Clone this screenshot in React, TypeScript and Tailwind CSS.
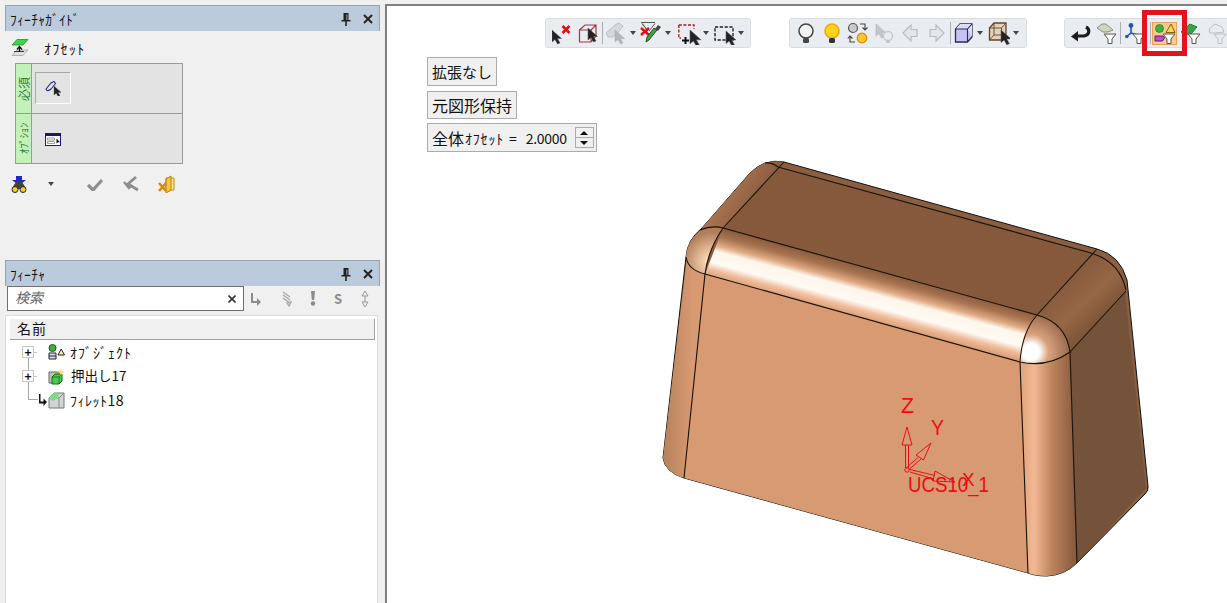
import React from "react";

type SvgProps = { w: number; h?: number; className?: string; children: React.ReactNode };

// every icon uses pixel coordinates, so the viewBox equals its size
const Svg: React.FC<SvgProps> = ({ w, h = 24, className, children }) => (
  <svg width={w} height={h} viewBox={`0 0 ${w} ${h}`} className={`shrink-0 ${className ?? ""}`}>
    {children}
  </svg>
);

const Cursor = ({ x, y, fill = "#222", s = 1 }: { x: number; y: number; fill?: string; s?: number }) => (
  <path
    transform={`translate(${x} ${y}) scale(${s})`}
    d="M0 0V12L3 9.5L5.5 14L8 13L5.5 8.5H9.5Z"
    fill={fill}
    stroke={fill === "#222" ? "#555" : "#aaa"}
    strokeWidth=".5"
  />
);

const Funnel = ({ x, y, fill = "#fff" }: { x: number; y: number; fill?: string }) => (
  <path
    transform={`translate(${x} ${y})`}
    d="M0 0H12L8 5V9.5H4V5Z"
    fill={fill}
    stroke="#555"
    strokeWidth="1"
  />
);

const Drop = ({ className }: { className?: string }) => (
  <Svg w={6} h={4} className={className}>
    <path d="M0 0H6L3 4Z" fill="#444" />
  </Svg>
);

const Sep = ({ className }: { className?: string }) => (
  <div className={`w-px h-[22px] bg-[#a9aeb3] shrink-0 ${className ?? ""}`} />
);

const Bulb = ({ on }: { on?: boolean }) => (
  <>
    <circle cx="8" cy="8" r="7" fill={on ? "#ffd21e" : "#f2f2f2"} stroke={on ? "#eca900" : "#444"} strokeWidth="1.5" />
    <rect x="5" y="15" width="6" height="5" rx="1.5" fill={on ? "#333" : "#444"} />
  </>
);

const PaneHeader = ({ title }: { title: string }) => (
  <div className="h-[26px] shrink-0 flex items-center bg-[#bccbdc] border-t border-x border-[#9aa3ad] pl-[4px] pr-[6px]">
    <span className="text-[13.5px] text-[#111] leading-none tracking-[.3px] flex-1 pt-[2px]">{title}</span>
    <Svg w={10} h={14} className="mr-[12px]">
      <path d="M2.5 1H7.5V8H9.5V9.5H5.8V14H4.2V9.5H.5V8H2.5ZM5.5 2.5V8H6.3V2.5Z" fill="#222" />
    </Svg>
    <Svg w={10} h={10}>
      <path d="M1 1L9 9M9 1L1 9" stroke="#222" strokeWidth="2" />
    </Svg>
  </div>
);

const ModelDrawing = () => (
  <svg viewBox="387 6 840 597" width={840} height={597} className="absolute left-0 top-0">
    <defs>
      <linearGradient id="frontFillet" gradientUnits="userSpaceOnUse" x1="880" y1="271" x2="867" y2="319">
        <stop offset="0" stopColor="#8a5c3f" />
        <stop offset=".18" stopColor="#a87350" />
        <stop offset=".36" stopColor="#e0ab85" />
        <stop offset=".48" stopColor="#fff6ec" />
        <stop offset=".72" stopColor="#fffaf4" />
        <stop offset=".86" stopColor="#f0bd9c" />
        <stop offset="1" stopColor="#dc9f78" />
      </linearGradient>
      <linearGradient id="leftStrip" gradientUnits="userSpaceOnUse" x1="664" y1="0" x2="692" y2="0">
        <stop offset="0" stopColor="#b8825c" />
        <stop offset="1" stopColor="#d79a72" />
      </linearGradient>
      <linearGradient id="rightStrip" gradientUnits="userSpaceOnUse" x1="1024" y1="0" x2="1074" y2="0">
        <stop offset="0" stopColor="#e4a880" />
        <stop offset=".2" stopColor="#f2b994" />
        <stop offset=".55" stopColor="#bd845e" />
        <stop offset="1" stopColor="#8a5c40" />
      </linearGradient>
      <linearGradient id="leftTop" gradientUnits="userSpaceOnUse" x1="722" y1="198" x2="750" y2="215">
        <stop offset="0" stopColor="#a9744f" />
        <stop offset="1" stopColor="#8a5d40" />
      </linearGradient>
      <linearGradient id="rightTop" gradientUnits="userSpaceOnUse" x1="1060" y1="280" x2="1098" y2="320">
        <stop offset="0" stopColor="#84583c" />
        <stop offset=".6" stopColor="#966745" />
        <stop offset="1" stopColor="#7f563a" />
      </linearGradient>
      <radialGradient id="cornerLeft" gradientUnits="userSpaceOnUse" cx="712" cy="262" r="30">
        <stop offset="0" stopColor="#ffffff" />
        <stop offset=".25" stopColor="#f5cfae" />
        <stop offset="1" stopColor="#b07d58" />
      </radialGradient>
      <radialGradient id="cornerRight" gradientUnits="userSpaceOnUse" cx="1031" cy="352" r="42">
        <stop offset="0" stopColor="#ffffff" />
        <stop offset=".2" stopColor="#ffffff" />
        <stop offset=".42" stopColor="#d8a27d" />
        <stop offset="1" stopColor="#8f6045" />
      </radialGradient>
    </defs>

    {/* silhouette */}
    <path
      d="M765 163Q775 160 784 162L1097 249Q1120 255 1127 280L1148 486Q1149 490 1145 494L1077 563Q1065 575 1047 576Q1035 576 1028 573L684 478Q665 472 663 458L686 257Q687 240 702 228L750 173Q757 166 765 163Z"
      fill="#8a5e41"
      stroke="#111"
      strokeWidth="1"
    />
    <path d="M723 228L784 162Q775 160 765 163Q757 166 750 173L702 228Q712 225 723 228Z" fill="url(#leftTop)" />
    <path d="M723 228L778 167L1091 253L1037 315Z" fill="#86593c" />
    <path d="M1037 315L1091 253Q1120 262 1126 290L1070 352Q1066 323 1037 315Z" fill="url(#rightTop)" />
    <path d="M1070 352L1125 292L1146 488L1077 563Z" fill="#75523a" />
    <path d="M723 228L1037 315L1020 362L705 274Z" fill="url(#frontFillet)" />
    <path d="M705 274L1020 362L1028 573L684 478Z" fill="#d79a72" />
    <path d="M687 257L705 274L684 478Q665 472 663 458Z" fill="url(#leftStrip)" />
    <path d="M1020 362Q1047 368 1070 352L1077 563Q1065 575 1047 576Q1035 576 1028 573Z" fill="url(#rightStrip)" />
    <path d="M705 274Q687 268 686 257Q687 240 702 229Q712 225 723 228Q708 250 705 274Z" fill="url(#cornerLeft)" />
    <path d="M1020 362Q1020 335 1037 315Q1066 323 1070 352Q1047 368 1020 362Z" fill="url(#cornerRight)" />

    {/* edges */}
    <g fill="none" stroke="#1a1208" strokeWidth="1.1">
      <path d="M705 274L1020 362M723 228L1037 315M778 167L1091 253M723 228L784 162M1037 315L1097 249M1070 352L1126 291" />
      <path d="M705 274L684 478M1020 362L1028 573M1070 352L1077 563" />
      <path d="M705 274Q708 250 723 228M686 257Q688 270 705 274M700 230Q712 225 723 228" />
      <path d="M1020 362Q1047 368 1070 352Q1066 323 1037 315Q1022 332 1020 362" />
      <path d="M1091 253Q1120 262 1126 290" />
      <path d="M765 163Q772 162 778 167" />
    </g>

    {/* UCS triad */}
    <g fill="none" stroke="#e8101c" strokeWidth="1">
      <path d="M905.5 468V445M908.5 468V445M902 445H912L907 427Z" />
      <path d="M906 468L918 457.5M908.5 470L921 459M916 455L923.5 460L931 443Z" />
      <path d="M910 469.5L935 475.5M910 472L934 479M935 471L933 481L955 482Z" />
      <circle cx="907" cy="470" r="2.2" />
    </g>
    <g fill="#f00a14" fontFamily="'Liberation Sans', sans-serif" fontSize="22">
      <text x="901" y="413" textLength="13" lengthAdjust="spacingAndGlyphs">Z</text>
      <text x="931" y="435" textLength="13" lengthAdjust="spacingAndGlyphs">Y</text>
      <text x="962" y="486" fontSize="19">X</text>
      <text x="908" y="492" textLength="81" lengthAdjust="spacingAndGlyphs">UCS10_1</text>
    </g>
  </svg>
);

const SelectionBar = () => (
  <div className="flex items-center w-[206px] h-[30px] shrink-0 bg-[#e9edf1] border border-[#d9dde1] rounded-[3px] pl-[6px]">
    <Svg w={20}>
      <Cursor x={0} y={9} />
      <path d="M10.5 5L17.5 12M17.5 5L10.5 12" stroke="#e01010" strokeWidth="2.6" />
    </Svg>
    <Svg w={20} className="ml-[6px]">
      <path d="M1.5 9L7 4H18V15L13 21H1.5ZM1.5 9H13V21M13 9L18 4" fill="none" stroke="#a23a3a" strokeWidth="1.2" />
      <Cursor x={10} y={7} />
    </Svg>
    <Sep className="ml-[4px]" />
    <Svg w={20} className="ml-[2px]">
      <path d="M1 12L10 4L14 2L18 5L15 9L8 16L3 16Z" fill="#d5d9dc" stroke="#bcc1c5" />
      <Cursor x={10} y={9} fill="#b4b8bc" />
    </Svg>
    <Drop className="ml-[5px]" />
    <Svg w={22} className="ml-[4px]">
      <path d="M1 1.5H15M2 2.5L8 10" stroke="#555" strokeWidth="1.2" fill="none" />
      <path d="M9 10L15 2.5" stroke="#555" strokeWidth="1" />
      <path d="M1 7L9 14M9 7L1 14" stroke="#e01010" strokeWidth="2.4" />
      <path d="M6 21L9 19L17 9L14 7L7 16Z" fill="#38a838" stroke="#222" strokeWidth=".8" />
      <path d="M15 8L18 4L21 6L18 10Z" fill="#444" />
    </Svg>
    <Drop className="ml-[3px]" />
    <Svg w={24} className="ml-[7px]">
      <path d="M.8 4H16V8M.8 4V17H3" fill="none" stroke="#a22020" strokeWidth="1.4" strokeDasharray="3 1.6" />
      <path d="M4 19.5H11M7.5 16V23" stroke="#111" strokeWidth="2" />
      <Cursor x={12} y={9} s={1.15} />
    </Svg>
    <Drop className="ml-[1px]" />
    <Svg w={22} className="ml-[5px]">
      <path d="M1 6H19V19H1Z" fill="none" stroke="#222" strokeWidth="1.4" strokeDasharray="3.2 1.6" />
      <Cursor x={12} y={10} s={1.05} />
    </Svg>
    <Drop className="ml-[2px]" />
  </div>
);

const ViewBar = () => (
  <div className="flex items-center w-[238px] h-[30px] shrink-0 ml-[38px] bg-[#e9edf1] border border-[#d9dde1] rounded-[3px] pl-[8px]">
    <Svg w={16}>
      <g transform="translate(0 2)"><Bulb /></g>
    </Svg>
    <Svg w={16} className="ml-[10px]">
      <g transform="translate(0 2)"><Bulb on /></g>
    </Svg>
    <Svg w={22} className="ml-[7px]">
      <circle cx="6" cy="7" r="4.5" fill="#c9c9c9" stroke="#555" strokeWidth="1.2" />
      <circle cx="15" cy="17" r="4.8" fill="#ffc433" stroke="#d88a00" strokeWidth="1.2" />
      <path d="M13 3H18V9M15.5 6.5L18 9L20.5 6.5M8 21H3V15M.8 17.5L3 15L5.5 17.5" fill="none" stroke="#444" strokeWidth="1.1" />
    </Svg>
    <Svg w={19} className="ml-[6px]">
      <Cursor x={1} y={3} fill="#c2c6ca" />
      <circle cx="13" cy="15" r="4.5" fill="none" stroke="#c5c9cc" strokeWidth="1.3" />
      <rect x="11" y="19" width="4" height="3" fill="#c5c9cc" />
    </Svg>
    <Svg w={16} className="ml-[8px]">
      <path d="M1 12L9 4V8.5H15V15.5H9V20Z" fill="#e4e7ea" stroke="#b9bdc1" strokeWidth="1.2" />
    </Svg>
    <Svg w={16} className="ml-[11px]">
      <path d="M15 12L7 4V8.5H1V15.5H7V20Z" fill="#e4e7ea" stroke="#b9bdc1" strokeWidth="1.2" />
    </Svg>
    <Sep className="ml-[5px]" />
    <Svg w={19} className="ml-[3px]">
      <path d="M1.5 8L6 3H18V16L13.5 21H1.5Z" fill="#c5c3f3" stroke="#2b2b52" strokeWidth="1.3" />
      <path d="M6 3H18V16L13.5 8H1.5Z" fill="#ddddf7" />
      <path d="M1.5 8H13.5V21M13.5 8L18 3" fill="none" stroke="#2b2b52" strokeWidth="1.1" />
    </Svg>
    <Drop className="ml-[4px]" />
    <Svg w={22} className="ml-[5px]">
      <path d="M1.5 7L6 2H18V14L13.5 19H1.5Z" fill="#e3d2b8" stroke="#5d4630" strokeWidth="1.3" />
      <path d="M1.5 7H13.5V19M13.5 7L18 2M6 2V14H18M6 14L1.5 19" fill="none" stroke="#5d4630" strokeWidth=".9" />
      <Cursor x={13} y={9} s={1.05} />
    </Svg>
    <Drop className="ml-[3px]" />
  </div>
);

const FilterBar = () => (
  <div className="flex items-center w-[200px] h-[30px] shrink-0 ml-[37px] bg-[#e9edf1] border border-[#d9dde1] rounded-[3px] pl-[5px]">
    <Svg w={21}>
      <path d="M16 6C20 8 20 14 14 15H7" fill="none" stroke="#1c1c1c" strokeWidth="3.2" />
      <path d="M8 10L1 15.5L8 20.5Z" fill="#1c1c1c" />
    </Svg>
    <Svg w={21} className="ml-[5px]">
      <path d="M1 7L6 3L10 3L17 9L12 11L7 11Z" fill="#c9d8c5" stroke="#9a8a70" />
      <Funnel x={8} y={13} />
    </Svg>
    <Sep className="ml-[3px]" />
    <Svg w={22} className="ml-[4px]">
      <path d="M6 4V12L1 16M6 12L13 14" stroke="#2952b3" strokeWidth="1.6" fill="none" />
      <circle cx="6" cy="4.5" r="2.4" fill="#2952b3" />
      <circle cx="1.8" cy="15.5" r="1.8" fill="#2952b3" />
      <Funnel x={8} y={13} />
    </Svg>
    <Sep className="ml-[3px]" />
    <div className="ml-px w-[25px] h-[23px] shrink-0 bg-[#fdc88f] border border-[#e8a15a]">
      <Svg w={23} h={21}>
        <circle cx="6.5" cy="5.5" r="4" fill="#3cb23c" stroke="#1f7a1f" strokeWidth=".7" />
        <path d="M13 9.5L18 1L22 9.5Z" fill="#f4d94c" stroke="#7a6510" />
        <path d="M2 13H10L11.5 15L9.5 18H2Z" fill="#c34ad1" stroke="#5a1f63" />
        <Funnel x={10} y={11} />
      </Svg>
    </div>
    <Svg w={22} className="ml-[3px]">
      <path d="M1 11L10 3L17 6L10 14Z" fill="#2fa84a" stroke="#1f7a33" />
      <Funnel x={8} y={13} />
    </Svg>
    <Svg w={22} className="ml-[5px]">
      <path d="M2 8L8 3L15 6L17 11L9 12L3 12Z" fill="none" stroke="#bdc1c5" />
      <path d="M7 13H19L15 18V22.5H11V18Z" fill="none" stroke="#bdc1c5" />
    </Svg>
  </div>
);

const OptionButton = ({ children, className }: { children: React.ReactNode; className?: string }) => (
  <div className={`flex items-center bg-[#f0f0f0] border border-[#ababab] text-[#111] leading-none ${className ?? ""}`}>
    {children}
  </div>
);

const TreeToggle = () => (
  <>
    <div className="relative ml-[12px] w-[12px] h-[12px] border border-[#c8c8c8] bg-white flex items-center justify-center text-[12px] font-bold leading-none">
      +
    </div>
    <div className="w-[3px] h-px bg-[#c8c8c8]" />
  </>
);

const App = () => (
  <div className="w-[1227px] h-[603px] flex bg-[#f0f0f0] overflow-hidden pt-[4px] font-['Noto_Sans_CJK_JP',sans-serif]">
    <aside className="w-[385px] shrink-0 flex flex-col pt-px pl-[5px] pr-[5px]">
      {/* feature guide */}
      <section className="h-[255px] shrink-0 flex flex-col">
        <PaneHeader title="ﾌｨｰﾁｬｶﾞｲﾄﾞ" />
        <div className="flex items-center h-[32px] pl-[5px]">
          <Svg w={18} h={17} className="ml-px">
            <path d="M1 6L6 .5H17L12 6Z" fill="#3fd34a" stroke="#1b7a22" strokeWidth=".7" />
            <path d="M1 16.5L6 11H17L12 16.5Z" fill="#e0e0e0" stroke="#999" strokeWidth=".7" />
            <path d="M8.5 13V8.5M6 10.5L8.5 7.5L11 10.5" stroke="#111" strokeWidth="1.2" fill="none" />
            <path d="M3 12.5H13" stroke="#111" strokeWidth=".8" />
          </Svg>
          <span className="ml-[15px] pt-px text-[14px] leading-none text-[#111] tracking-[1.3px]">ｵﾌｾｯﾄ</span>
        </div>
        <div className="ml-[10px] w-[168px] h-[101px] border border-[#9a9a9a] bg-[#e3e3e3] flex flex-col">
          <div className="h-[50px] flex border-b border-[#9a9a9a]">
            <div className="w-[16px] bg-[#c2f1b9] border-r border-[#9a9a9a] flex items-center justify-center">
              <span className="rotate-[-90deg] text-[12px] whitespace-nowrap text-[#2c7a3a] leading-none">必須</span>
            </div>
            <div className="ml-[3px] mt-[8px] w-[36px] h-[32px] border border-t-[#a8a8a8] border-l-[#a8a8a8] border-r-white border-b-white flex items-center justify-center">
              <Svg w={16} h={16}>
                <path d="M1 9L6 3L9 1.5L10.5 3.5L6 9Q4 11 2 10.5Z" fill="none" stroke="#2b2b8c" strokeWidth="1.1" />
                <Cursor x={9} y={6} s={.75} />
              </Svg>
            </div>
          </div>
          <div className="flex-1 flex">
            <div className="w-[16px] bg-[#c2f1b9] border-r border-[#9a9a9a] flex items-center justify-center">
              <span className="rotate-[-90deg] text-[10.5px] whitespace-nowrap text-[#2c7a3a] leading-none">ｵﾌﾟｼｮﾝ</span>
            </div>
            <div className="ml-[13px] mt-[19px]">
              <Svg w={16} h={13}>
                <rect x=".5" y=".5" width="15" height="12" fill="#fff" stroke="#1a1a70" />
                <rect x="0" y="0" width="16" height="3" fill="#1a1a70" />
                <path d="M2.5 5H9.5V7H2.5ZM2.5 8.5H9.5V10.5H2.5Z" fill="none" stroke="#777" strokeWidth=".7" />
                <path d="M11.5 5.5V10.5L13 9.2L15 9.2Z" fill="#111" />
              </Svg>
            </div>
          </div>
        </div>
        <div className="flex items-center pl-[6px] mt-[11px]">
          <Svg w={16} h={17}>
            <path d="M5 0H11V4H15L8 9.5L1 4H5Z" fill="#1b2ac9" />
            <path d="M3 9L5 6H11L13 9L15 13H1Z" fill="#444" />
            <circle cx="4" cy="13.5" r="3" fill="#f4d20a" stroke="#222" />
            <circle cx="12" cy="13.5" r="3" fill="#f4d20a" stroke="#222" />
          </Svg>
          <Drop className="ml-[21px]" />
          <Svg w={16} h={13} className="ml-[33px]">
            <path d="M1 7L6 12L15 2" fill="none" stroke="#8e8e8e" strokeWidth="3.2" />
          </Svg>
          <Svg w={16} h={16} className="ml-[20px]">
            <path d="M13 1L5 8L15 14" fill="none" stroke="#8e8e8e" strokeWidth="2.8" />
            <path d="M1 6L6 12L9 9" fill="none" stroke="#8e8e8e" strokeWidth="2.4" />
          </Svg>
          <Svg w={18} h={18} className="ml-[19px]">
            <path d="M8 3H16V15H8Z" fill="#fbe9a0" stroke="#c58a00" />
            <path d="M8 4L13 1V15L8 18Z" fill="#f6c542" stroke="#b98000" />
            <path d="M1 8L8 16M8 8L1 16" stroke="#d08a1a" strokeWidth="2.6" />
          </Svg>
        </div>
      </section>

      {/* feature tree */}
      <section className="flex-1 flex flex-col min-h-0">
        <PaneHeader title="ﾌｨｰﾁｬ" />
        <div className="flex items-center h-[25px] shrink-0">
          <div className="ml-[2px] w-[237px] h-[25px] bg-white border border-[#6e6e6e] flex items-center pl-[7px] pr-[7px]">
            <span className="flex-1 italic text-[14px] leading-none text-[#666] pb-[4px]">検索</span>
            <Svg w={8} h={8}>
              <path d="M.5 .5L7.5 7.5M7.5 .5L.5 7.5" stroke="#333" strokeWidth="1.6" />
            </Svg>
          </div>
          <Svg w={10} h={14} className="ml-[7px]">
            <path d="M2 1V9H6V6L10 10L6 14V11H0V1Z" fill="#8c8c8c" />
          </Svg>
          <Svg w={10} h={16} className="ml-[21px]">
            <path d="M1 1L8 6M1 4L8 9M1 7L8 12M7 15L9 11L5 12Z" stroke="#a8a8a8" strokeWidth="1.3" fill="none" />
          </Svg>
          <Svg w={6} h={15} className="ml-[18px]">
            <path d="M1 0H5L4.2 9H1.8Z" fill="#8c8c8c" />
            <circle cx="3" cy="12.5" r="2.2" fill="#8c8c8c" />
          </Svg>
          <span className="ml-[18px] text-[13px] leading-none font-bold text-[#8c8c8c]">S</span>
          <Svg w={8} h={16} className="ml-[19px]">
            <path d="M4 0L7 5H1ZM4 16L7 11H1ZM4 5V11" fill="none" stroke="#9a9a9a" strokeWidth="1" />
          </Svg>
        </div>
        <div className="relative mt-[4px] mr-[2px] flex-1 bg-white border border-b-0 border-[#dcdcdc] pl-[4px] pt-[3px]">
          <div className="mr-[2px] h-[21px] bg-[#f0f0f0] border-b border-r border-[#a0a0a0] flex items-center pl-[7px] pb-[2px] text-[14px] text-[#111] leading-none tracking-[1px]">
            名前
          </div>
          <div className="relative flex flex-col text-[#111] leading-none">
            <div className="absolute left-[18px] top-[18px] w-[10px] h-[42px] border-l border-b border-[#a8a8a8]" />
            <div className="h-[24px] flex items-center">
              <TreeToggle />
              <Svg w={17} h={16} className="ml-[11px]">
                <circle cx="4.5" cy="4" r="3.5" fill="#3cb23c" stroke="#165c16" />
                <path d="M10 11L13.2 5L16.5 11Z" fill="#f7ee9c" stroke="#222" />
                <path d="M1 9H8V15H1Z" fill="#d9d9f5" stroke="#222" />
                <path d="M1 12H8" stroke="#222" />
              </Svg>
              <span className="ml-[5px] text-[14px] tracking-[1px]">ｵﾌﾞｼﾞｪｸﾄ</span>
            </div>
            <div className="h-[24px] flex items-center">
              <TreeToggle />
              <Svg w={17} h={17} className="ml-[11px]">
                <path d="M1 4H11V15H1Z" fill="#b8c8b8" stroke="#666" />
                <path d="M4 9L7 6H14V13L11 16H4Z" fill="#4dc94d" stroke="#136b13" />
                <path d="M4 9H11V16M11 9L14 6" fill="none" stroke="#136b13" strokeWidth=".8" />
                <path d="M13 0L14 3L17 4L14 5L13 8L12 5L9 4L12 3Z" fill="#f7e25a" />
              </Svg>
              <span className="ml-[6px] text-[13.5px]">押出し17</span>
            </div>
            <div className="h-[24px] flex items-center">
              <Svg w={8} h={12} className="ml-[29px]">
                <path d="M1.5 0V7.5H4.5V4.5L8 8L4.5 12V9.5H0V0Z" fill="#111" />
              </Svg>
              <Svg w={17} h={17} className="ml-px">
                <path d="M1 6L6 1H16V16H1Z" fill="#d4d4d4" stroke="#777" />
                <path d="M1 6H11V16M11 6L16 1" fill="none" stroke="#888" />
                <path d="M1.5 7C1.5 3 5 1 8 1C11 1 11 4 10 6L5 9Z" fill="#7adb86" />
              </Svg>
              <span className="ml-[5px] text-[14px] tracking-[.5px]">ﾌｨﾚｯﾄ18</span>
            </div>
          </div>
        </div>
      </section>
    </aside>

    {/* graphics window */}
    <main className="relative flex-1 bg-white border-l-2 border-t-2 border-[#808080] overflow-hidden">
      <ModelDrawing />
      <div className="relative flex pl-[158px] pt-[12px]">
        <SelectionBar />
        <ViewBar />
        <FilterBar />
        <div className="absolute left-[755px] top-[4px] w-[45px] h-[46px] border-[5px] border-[#e3131c]" />
      </div>
      <div className="relative mt-[9px] ml-[40px] flex flex-col items-start">
        <OptionButton className="w-[70px] h-[29px] pl-[4px] text-[15px]">拡張なし</OptionButton>
        <OptionButton className="w-[90px] h-[28px] pl-[4px] mt-[5px] text-[16px]">元図形保持</OptionButton>
        <OptionButton className="w-[170px] h-[29px] pl-[4px] mt-[4px] text-[16px]">
          <span>全体</span>
          <span className="ml-px text-[14px] tracking-[.8px]">ｵﾌｾｯﾄ</span>
          <span className="ml-[5px] text-[14px]">=</span>
          <span className="ml-[9px] text-[14px] tracking-[-.3px]">2.0000</span>
          <div className="ml-[8px] w-[19px] h-[21px] flex flex-col border border-[#ababab]">
            <div className="flex-1 flex items-center justify-center border-b border-[#ababab]">
              <div className="w-0 h-0 border-x-[4px] border-x-transparent border-b-[4px] border-b-[#111]" />
            </div>
            <div className="flex-1 flex items-center justify-center">
              <div className="w-0 h-0 border-x-[4px] border-x-transparent border-t-[4px] border-t-[#111]" />
            </div>
          </div>
        </OptionButton>
      </div>
    </main>
  </div>
);

export default App;
